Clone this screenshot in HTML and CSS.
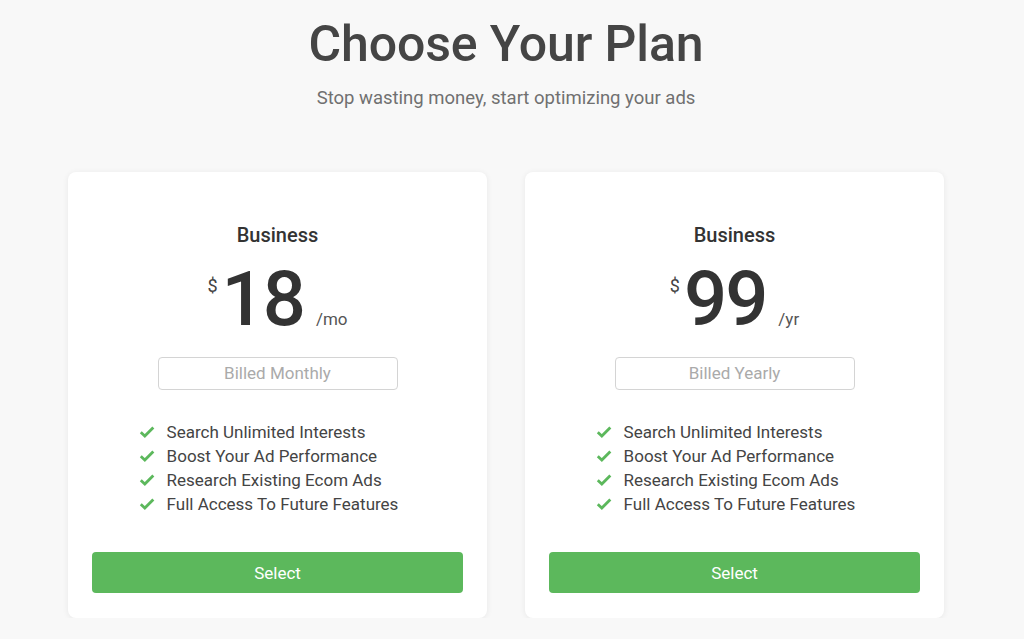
FILE: index.html
```html
<!DOCTYPE html>
<html lang="en">
<head>
<meta charset="utf-8">
<title>Choose Your Plan</title>
<link rel="stylesheet" href="styles.css">
</head>
<body>
<main class="page">
  <header class="hero">
    <h1 class="hero-title">Choose Your Plan</h1>
    <p class="hero-sub">Stop wasting money, start optimizing your ads</p>
  </header>
  <section class="plans">
    <article class="card">
      <h2 class="plan-name">Business</h2>
      <div class="price">
        <span class="currency">$</span>
        <span class="amount">18</span>
        <span class="period">/mo</span>
      </div>
      <div class="billing">Billed Monthly</div>
      <ul class="features">
        <li><svg class="check" viewBox="0 0 14 11"><path d="M1.3 5.8 L5 9.2 L12.8 1.4" /></svg>Search Unlimited Interests</li>
        <li><svg class="check" viewBox="0 0 14 11"><path d="M1.3 5.8 L5 9.2 L12.8 1.4" /></svg>Boost Your Ad Performance</li>
        <li><svg class="check" viewBox="0 0 14 11"><path d="M1.3 5.8 L5 9.2 L12.8 1.4" /></svg>Research Existing Ecom Ads</li>
        <li><svg class="check" viewBox="0 0 14 11"><path d="M1.3 5.8 L5 9.2 L12.8 1.4" /></svg>Full Access To Future Features</li>
      </ul>
      <button class="select-btn" type="button">Select</button>
    </article>
    <article class="card">
      <h2 class="plan-name">Business</h2>
      <div class="price">
        <span class="currency">$</span>
        <span class="amount">99</span>
        <span class="period">/yr</span>
      </div>
      <div class="billing">Billed Yearly</div>
      <ul class="features">
        <li><svg class="check" viewBox="0 0 14 11"><path d="M1.3 5.8 L5 9.2 L12.8 1.4" /></svg>Search Unlimited Interests</li>
        <li><svg class="check" viewBox="0 0 14 11"><path d="M1.3 5.8 L5 9.2 L12.8 1.4" /></svg>Boost Your Ad Performance</li>
        <li><svg class="check" viewBox="0 0 14 11"><path d="M1.3 5.8 L5 9.2 L12.8 1.4" /></svg>Research Existing Ecom Ads</li>
        <li><svg class="check" viewBox="0 0 14 11"><path d="M1.3 5.8 L5 9.2 L12.8 1.4" /></svg>Full Access To Future Features</li>
      </ul>
      <button class="select-btn" type="button">Select</button>
    </article>
  </section>
</main>
</body>
</html>
```
FILE: styles.css
```css
* { box-sizing: border-box; }
html, body { margin: 0; padding: 0; }
body {
  background: #f8f8f8;
  font-family: Roboto, "Liberation Sans", Arial, sans-serif;
  color: #333;
}
.page {
  width: 876px;
  margin-left: 68px;
}
.hero {
  text-align: center;
  padding-top: 14px;
}
.hero-title {
  margin: 0;
  font-size: 50px;
  line-height: 60px;
  font-weight: 500;
  color: #454545;
  letter-spacing: -0.1px;
}
.hero-sub {
  margin: 12px 0 0;
  font-size: 18.5px;
  line-height: 24px;
  color: #707070;
}
.plans {
  display: grid;
  grid-template-columns: 419px 419px;
  justify-content: space-between;
  margin-top: 62px;
}
.card {
  background: #fff;
  border-radius: 8px;
  box-shadow: 0 1px 6px rgba(0,0,0,0.07);
  padding: 51px 24px 25px;
  text-align: center;
  height: 446px;
  display: flex;
  flex-direction: column;
  align-items: center;
}
.plan-name {
  margin: 0;
  font-size: 20px;
  line-height: 24px;
  font-weight: 500;
  color: #333;
}
.price {
  display: flex;
  align-items: baseline;
  justify-content: center;
  margin-top: 14px;
  height: 87px;
}
.currency {
  align-self: flex-start;
  font-size: 18px;
  line-height: 18px;
  color: #444;
  margin-top: 16px;
  margin-right: 4px;
}
.amount {
  font-size: 76px;
  line-height: 76px;
  font-weight: 500;
  color: #333;
  letter-spacing: -2px;
}
.period {
  font-size: 17px;
  line-height: 17px;
  color: #555;
  margin-left: 12px;
}
.billing {
  margin-top: 9px;
  width: 240px;
  height: 33px;
  border: 1px solid #d4d4d4;
  border-radius: 4px;
  font-size: 17px;
  line-height: 31px;
  color: #aaa;
}
.features {
  list-style: none;
  margin: 30px 0 0;
  padding: 0 18px 0 0;
  text-align: left;
}
.features li {
  display: flex;
  align-items: center;
  font-size: 17px;
  line-height: 24px;
  color: #444;
}
.check {
  width: 16px;
  height: 12px;
  margin-right: 12px;
  fill: none;
  stroke: #5cb85c;
  stroke-width: 2.6;
  stroke-linecap: butt;
  stroke-linejoin: miter;
}
.select-btn {
  margin-top: auto;
  width: 100%;
  height: 41px;
  border: 0;
  border-radius: 4px;
  background: #5cb85c;
  color: #fff;
  font-family: inherit;
  font-size: 17px;
  font-weight: 400;
}
```
